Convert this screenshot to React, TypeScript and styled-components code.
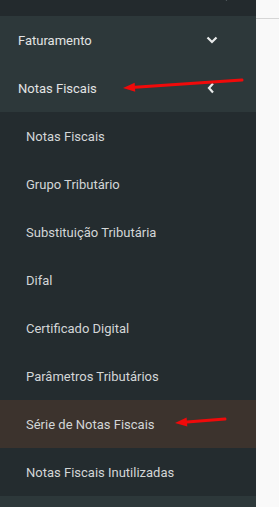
import React from 'react';
import styled, { createGlobalStyle } from 'styled-components';

const GlobalStyle = createGlobalStyle`
html, body {
    margin: 0;
    padding: 0;
    background: #f9f9f9;
    font-family: Roboto, "Open Sans", sans-serif;
}
`;

const Page = styled.div`
position: relative;
display: flex;
width: 279px;
height: 507px;
overflow: hidden;
`;

const Sidebar = styled.nav`
width: 256px;
display: flex;
flex-direction: column;
background-color: #2d383a;
`;

const TopBar = styled.div`
position: relative;
height: 16px;
background-color: #232a2d;
`;

const TopIcon = styled.span`
position: absolute;
left: 222px;
top: -3px;
width: 6px;
height: 2px;
background: #6f7a7d;
transform: rotate(45deg);
`;

const Content = styled.div`
flex: 1;
border-top: 1px solid #d6d6d6;
margin-top: 18px;
background: #f9f9f9;
`;

const MenuRow = styled.div`
display: flex;
align-items: center;
justify-content: space-between;
height: 48px;
padding: 0 38px 0 18px;
font-size: 13px;
color: #e2e4e4;
`;

const SubMenu = styled.ul`
list-style: none;
margin: 0;
padding: 0;
background-color: #242c2f;
`;

interface SubItemProps {
    readonly $active?: boolean;
}
const SubItem = styled.li<SubItemProps>`
display: flex;
align-items: center;
height: 48px;
padding-left: 26px;
font-size: 13px;
color: #d3d6d7;
background-color: ${props => props.$active ? '#3c332d' : 'transparent'};
`;

const Chevron = styled.svg`
display: block;
`;

const Arrows = styled.svg`
position: absolute;
left: 0;
top: 0;
pointer-events: none;
`;

const subItems = [
    'Notas Fiscais',
    'Grupo Tributário',
    'Substituição Tributária',
    'Difal',
    'Certificado Digital',
    'Parâmetros Tributários',
    'Série de Notas Fiscais',
    'Notas Fiscais Inutilizadas',
];

const Arrow: React.FC<{ x1: number; y1: number; x2: number; y2: number }> = ({ x1, y1, x2, y2 }) => {
    const ang = Math.atan2(y2 - y1, x2 - x1);
    const len = 12;
    const w = 4.5;
    const bx = x2 - Math.cos(ang) * len;
    const by = y2 - Math.sin(ang) * len;
    const px = -Math.sin(ang) * w;
    const py = Math.cos(ang) * w;
    return (
        <g>
            <line x1={x1} y1={y1} x2={bx} y2={by} stroke="#f00a0a" strokeWidth="3" strokeLinecap="round" />
            <polygon points={`${x2},${y2} ${bx + px},${by + py} ${bx - px},${by - py}`} fill="#f00a0a" />
        </g>
    );
};

const App: React.FC = () => {
    return (
        <Page>
            <GlobalStyle />
            <Sidebar>
                <TopBar><TopIcon /></TopBar>
                <MenuRow>
                    <span>Faturamento</span>
                    <Chevron width="12" height="8" viewBox="0 0 12 8">
                        <path d="M1.5 1.5 L6 6 L10.5 1.5" stroke="#e8eaea" strokeWidth="2.2" fill="none" />
                    </Chevron>
                </MenuRow>
                <MenuRow>
                    <span>Notas Fiscais</span>
                    <Chevron width="8" height="12" viewBox="0 0 8 12" style={{ marginRight: 3 }}>
                        <path d="M6 1.5 L2 6 L6 10.5" stroke="#e8eaea" strokeWidth="2.2" fill="none" />
                    </Chevron>
                </MenuRow>
                <SubMenu>
                    {subItems.map((item, i) => (
                        <SubItem key={item} $active={i === 6}>{item}</SubItem>
                    ))}
                </SubMenu>
            </Sidebar>
            <Content />
            <Arrows width="279" height="507" viewBox="0 0 279 507">
                <Arrow x1={242} y1={80} x2={123} y2={88} />
                <Arrow x1={225} y1={419} x2={175} y2={423} />
            </Arrows>
        </Page>
    );
};

export default App;
